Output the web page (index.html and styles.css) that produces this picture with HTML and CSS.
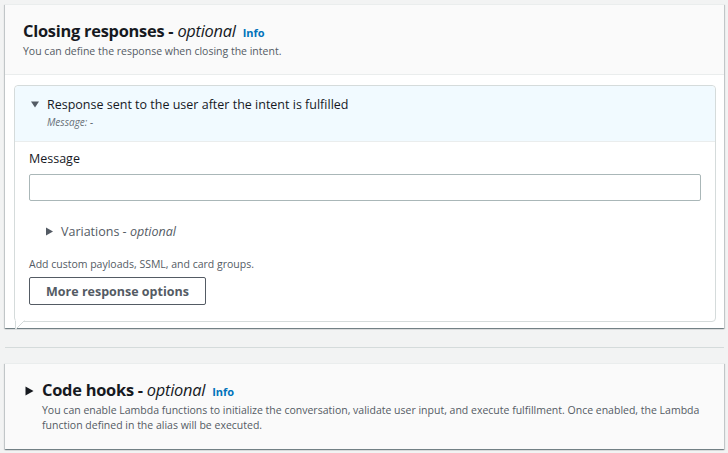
FILE: index.html
```html
<!DOCTYPE html>
<html>
<head>
<meta charset="utf-8">
<link rel="stylesheet" href="styles.css">
</head>
<body>
<div class="page">
  <section class="card">
    <header class="card-head">
      <h2 class="title">Closing responses - <i>optional</i> <a class="info">Info</a></h2>
      <p class="desc">You can define the response when closing the intent.</p>
    </header>
    <div class="card-body">
      <div class="bubble">
        <div class="bubble-head">
          <div class="exp-row">
            <svg class="caret" width="8" height="8" viewBox="0 0 8 8"><path d="M0 1.5h8L4 7.5z" fill="#545b64"/></svg>
            <span class="exp-title">Response sent to the user after the intent is fulfilled</span>
          </div>
          <div class="exp-sub">Message: -</div>
        </div>
        <div class="bubble-body">
          <label class="label">Message</label>
          <div class="input"></div>
          <div class="variations">
            <svg class="caret" width="8" height="9" viewBox="0 0 8 9"><path d="M1 0.5v8l7-4z" fill="#545b64"/></svg>
            <span>Variations - <i>optional</i></span>
          </div>
          <p class="hint">Add custom payloads, SSML, and card groups.</p>
          <button class="btn">More response options</button>
        </div>
        <svg class="tail" width="12" height="10" viewBox="0 0 12 10"><path d="M0.5 0v9.5L10 0" fill="#fff" stroke="#d5dbdb"/><path d="M0 0h12" stroke="#fff" stroke-width="1"/></svg>
      </div>
    </div>
  </section>
  <hr class="sep">
  <section class="card card2">
    <header class="card-head head2">
      <svg class="caret big" width="9" height="10" viewBox="0 0 9 10"><path d="M0.5 0.5v9l8-4.5z" fill="#16191f"/></svg>
      <div>
        <h2 class="title">Code hooks - <i>optional</i> <a class="info">Info</a></h2>
        <p class="desc">You can enable Lambda functions to initialize the conversation, validate user input, and execute fulfillment. Once enabled, the Lambda function defined in the alias will be executed.</p>
      </div>
    </header>
  </section>
</div>
</body>
</html>
```
FILE: styles.css
```css
* { box-sizing: border-box; }
html, body { margin: 0; padding: 0; }
body {
  background: #f2f3f3;
  font-family: "Open Sans", "Noto Sans", sans-serif;
  color: #16191f;
  width: 728px;
  height: 453px;
  overflow: hidden;
}
.page { padding: 4px 4px 0 5px; }
.card {
  background: #fff;
  border-top: 1px solid #eaeded;
  box-shadow: 0 1px 1px 0 rgba(0,28,36,.35), 1px 1px 1px 0 rgba(0,28,36,.15), -1px 1px 1px 0 rgba(0,28,36,.15);
}
.card-head {
  background: #fafafa;
  border-bottom: 1px solid #eaeded;
  padding: 15px 18px 0;
  height: 70px;
}
.title {
  margin: 0;
  font-size: 16.4px;
  font-weight: 700;
  line-height: 22px;
  letter-spacing: -0.25px;
}
.title i { font-weight: 400; }
.info {
  font-size: 11px;
  font-weight: 700;
  color: #0073bb;
  margin-left: 3px;
  letter-spacing: 0;
}
.desc {
  margin: 0;
  font-size: 10.5px;
  line-height: 15px;
  color: #545b64;
}
.card-body { padding: 10px 8px 6px 9px; }
.bubble {
  position: relative;
  border: 1px solid #d5dbdb;
  border-radius: 4px;
}
.bubble-head {
  background: #f1faff;
  border-bottom: 1px solid #eaeded;
  border-radius: 4px 4px 0 0;
  height: 56px;
  padding: 8px 16px 0;
}
.exp-row { display: flex; align-items: center; gap: 8px; height: 20px; }
.exp-title { font-size: 12.5px; color: #16191f; }
.exp-sub {
  font-size: 10px;
  font-style: italic;
  color: #687078;
  padding-left: 16px;
  margin-top: 1px;
}
.bubble-body { padding: 8px 14px 16px; }
.label { display: block; font-size: 12.5px; line-height: 18px; color: #16191f; }
.input {
  margin-top: 6px;
  height: 27px;
  border: 1px solid #aab7b8;
  border-radius: 2px;
  background: #fff;
}
.variations {
  display: flex;
  align-items: center;
  gap: 8px;
  padding-left: 16px;
  margin-top: 20px;
  height: 20px;
  font-size: 12.5px;
  color: #545b64;
}
.hint {
  margin: 16px 0 0;
  font-size: 10.5px;
  line-height: 15px;
  color: #545b64;
}
.btn {
  display: block;
  margin-top: 5px;
  width: 177px;
  height: 28px;
  border: 1px solid #545b64;
  border-radius: 2px;
  background: #fff;
  font-family: inherit;
  font-size: 12.5px;
  font-weight: 700;
  color: #545b64;
  padding: 0;
}
.tail {
  position: absolute;
  left: 0;
  bottom: -9px;
  display: block;
}
.sep {
  border: 0;
  border-top: 1px solid #d5dbdb;
  margin: 19px 0 15px;
}
.head2 {
  display: flex;
  align-items: flex-start;
  gap: 8px;
  height: 85px;
  padding: 15px 18px 0 20px;
  border-bottom: 0;
}
.caret { flex: none; }
.caret.big { margin-top: 7px; }
```
